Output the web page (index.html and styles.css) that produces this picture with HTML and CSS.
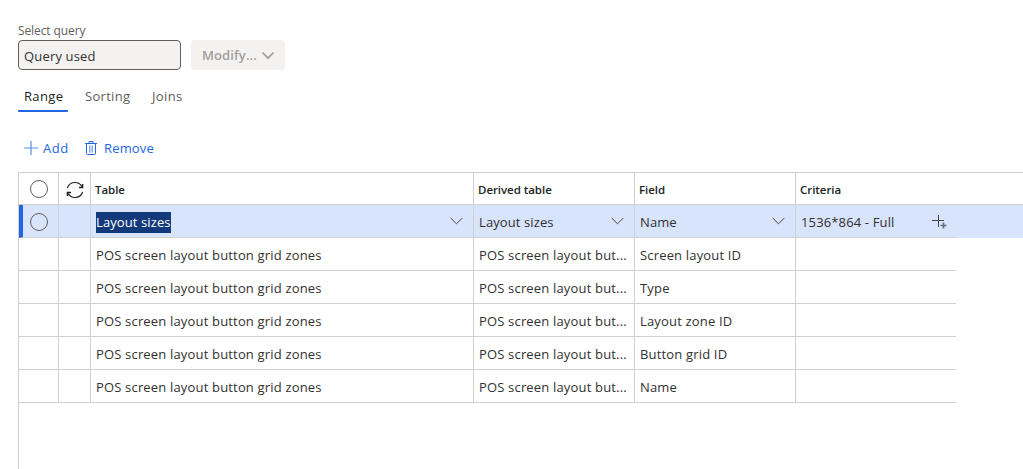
FILE: index.html
```html
<!DOCTYPE html>
<html lang="en">
<head>
<meta charset="utf-8">
<title>Select query</title>
<link rel="stylesheet" href="styles.css">
</head>
<body>
<main class="page">
  <label class="label" for="query">Select query</label>
  <div class="query-row">
    <div class="query-box" id="query"><span>Query used</span></div>
    <button class="modify" disabled><span>Modify...</span><svg width="14" height="9" viewBox="0 0 14 9"><path d="M1.5 1.5 7 7.2 12.5 1.5"/></svg></button>
  </div>
  <nav class="tabs">
    <a class="tab tab-active"><span>Range</span></a>
    <a class="tab tab-sorting"><span>Sorting</span></a>
    <a class="tab tab-joins"><span>Joins</span></a>
  </nav>
  <div class="toolbar">
    <svg class="plus" width="14" height="14" viewBox="0 0 14 14"><path d="M7 0v14M0 7h14"/></svg>
    <span class="add">Add</span>
    <svg class="trash" width="12" height="14" viewBox="0 0 12 14"><path d="M0 2.5h12M4 2.5V.6h4v1.9M1.5 2.5v10q0 1 1 1h7q1 0 1-1v-10"/><path class="slats" d="M4.5 4.500v7M6 4.500v7M7.500 4.500v7"/></svg>
    <span class="remove">Remove</span>
  </div>
  <section class="table">
    <div class="row head">
      <div class="cell mark"><i class="radio"></i></div>
      <div class="cell sync"><svg width="18" height="18" viewBox="0 0 18 18"><path d="M1.300 7C2.500 3.700 5.300 1.500 9 1.500c3 0 5.500 1.500 6.700 4M16.700 11C15.500 14.300 12.700 16.500 9 16.500c-3 0-5.500-1.500-6.700-4"/><path class="tips" d="M16.500 3v3.500H13M1.500 15v-3.500H5"/></svg></div>
      <div class="cell"><span>Table</span></div>
      <div class="cell"><span>Derived table</span></div>
      <div class="cell"><span>Field</span></div>
      <div class="cell"><span>Criteria</span></div>
    </div>
    <div class="row selected">
      <div class="cell mark"><i class="radio"></i></div>
      <div class="cell"></div>
      <div class="cell pick"><span class="highlight">Layout sizes</span><svg width="13" height="8" viewBox="0 0 13 8"><path d="M.7 1 6.500 6.800 12.300 1"/></svg></div>
      <div class="cell pick"><span>Layout sizes</span><svg width="13" height="8" viewBox="0 0 13 8"><path d="M.7 1 6.500 6.800 12.300 1"/></svg></div>
      <div class="cell pick"><span>Name</span><svg width="13" height="8" viewBox="0 0 13 8"><path d="M.7 1 6.500 6.800 12.300 1"/></svg></div>
      <div class="cell pick criteria"><span>1536*864 - Full</span><svg width="15" height="15" viewBox="0 0 15 15"><path d="M6.500 1v12M0 6.500h12"/><path class="small-plus" d="M11.500 8.500v6M8.500 11.500h6"/></svg></div>
    </div>
    <div class="row"><div class="cell"></div><div class="cell"></div><div class="cell"><span>POS screen layout button grid zones</span></div><div class="cell"><span>POS screen layout but...</span></div><div class="cell"><span>Screen layout ID</span></div><div class="cell"></div></div>
    <div class="row"><div class="cell"></div><div class="cell"></div><div class="cell"><span>POS screen layout button grid zones</span></div><div class="cell"><span>POS screen layout but...</span></div><div class="cell"><span>Type</span></div><div class="cell"></div></div>
    <div class="row"><div class="cell"></div><div class="cell"></div><div class="cell"><span>POS screen layout button grid zones</span></div><div class="cell"><span>POS screen layout but...</span></div><div class="cell"><span>Layout zone ID</span></div><div class="cell"></div></div>
    <div class="row"><div class="cell"></div><div class="cell"></div><div class="cell"><span>POS screen layout button grid zones</span></div><div class="cell"><span>POS screen layout but...</span></div><div class="cell"><span>Button grid ID</span></div><div class="cell"></div></div>
    <div class="row"><div class="cell"></div><div class="cell"></div><div class="cell"><span>POS screen layout button grid zones</span></div><div class="cell"><span>POS screen layout but...</span></div><div class="cell"><span>Name</span></div><div class="cell"></div></div>
  </section>
</main>
</body>
</html>
```
FILE: styles.css
```css
* { box-sizing: border-box; }
body {
  margin: 0;
  background: #fff;
  color: #323130;
  font-family: "Open Sans", "Noto Sans", sans-serif;
  font-size: 13px;
  line-height: 18px;
  letter-spacing: 0.17px;
  white-space: nowrap;
}
svg { flex: none; fill: none; stroke: currentColor; }
.page {
  display: flex;
  flex-direction: column;
  height: 469px;
  padding: 23px 0 0 18px;
  overflow: hidden;
}
.label { height: 17px; font-size: 12px; line-height: 16px; font-weight: 500; letter-spacing: -0.1px; color: #605e5c; }
.query-row { display: flex; gap: 10px; height: 30px; }
.query-box {
  width: 163px;
  height: 30px;
  padding: 6px 5px 0;
  border: 1px solid #605e5c;
  border-radius: 4px;
  background: #f3f2f1;
}
.modify {
  display: flex;
  align-items: center;
  gap: 4px;
  width: 94px;
  height: 30px;
  padding: 0 0 0 11px;
  border: 0;
  border-radius: 4px;
  background: #f3f2f1;
  color: #a19f9d;
  font: 600 13px/18px "Open Sans", "Noto Sans", sans-serif;
  letter-spacing: 0.1px;
}
.modify svg { stroke-width: 1.8; }
.tabs { display: flex; height: 42px; padding-top: 17px; color: #605e5c; }
.tab { height: 25px; }
.tab-active { width: 50px; padding-left: 6px; border-bottom: 2px solid #2266e3; border-radius: 1px; color: #201f1e; letter-spacing: 0.35px; }
.tab-sorting { width: 67px; padding-left: 17px; letter-spacing: 0.3px; }
.tab-joins { padding-left: 17px; letter-spacing: 0.35px; }
.toolbar { display: flex; align-items: center; height: 18px; margin: 27px 0 15px; padding-left: 6px; color: #2266e3; }
.plus { stroke-width: 1.2; opacity: .75; }
.add { width: 42px; margin-left: 5px; letter-spacing: 0.5px; }
.remove { margin-left: 7px; }
.slats { stroke-width: .8; opacity: .7; }
.table { flex: 1; border-top: 1px solid #d2d0ce; border-left: 1px solid #d2d0ce; }
.row { display: grid; grid-template-columns: 40px 32px 383px 161px 161px 160px; height: 33px; }
.cell { display: flex; align-items: center; padding: 2px 0 0 5px; border-right: 1px solid #d2d0ce; border-bottom: 1px solid #d2d0ce; }
.cell:last-child { border-right: 0; }
.head { height: 32px; border-bottom: 1px solid #d2d0ce; font-size: 11.5px; font-weight: 600; letter-spacing: -0.05px; color: #201f1e; }
.head .cell { padding-left: 4px; border-bottom: 0; }
.head .mark, .selected .mark { padding: 1px 0 0 11px; }
.head .sync { padding: 2px 0 0 7px; }
.radio { width: 18px; height: 18px; border: 1.3px solid #605e5c; border-radius: 50%; }
.sync svg { stroke-width: 1.1; }
.sync .tips { stroke-width: 1.6; }
.selected { background: #d8e3fc; letter-spacing: 0.1px; }
.selected .mark { padding-left: 7px; border-left: 4px solid #2266e3; }
.pick { justify-content: space-between; padding-right: 10px; }
.pick svg { margin-bottom: 3px; stroke: #484644; }
.criteria { letter-spacing: 0.14px; }
.criteria svg { margin: 0 -1px 2px 0; }
.highlight { height: 21px; background: #123a7b; color: #fff; line-height: 21px; }
.small-plus { stroke-width: 1.6; opacity: .75; }
```
